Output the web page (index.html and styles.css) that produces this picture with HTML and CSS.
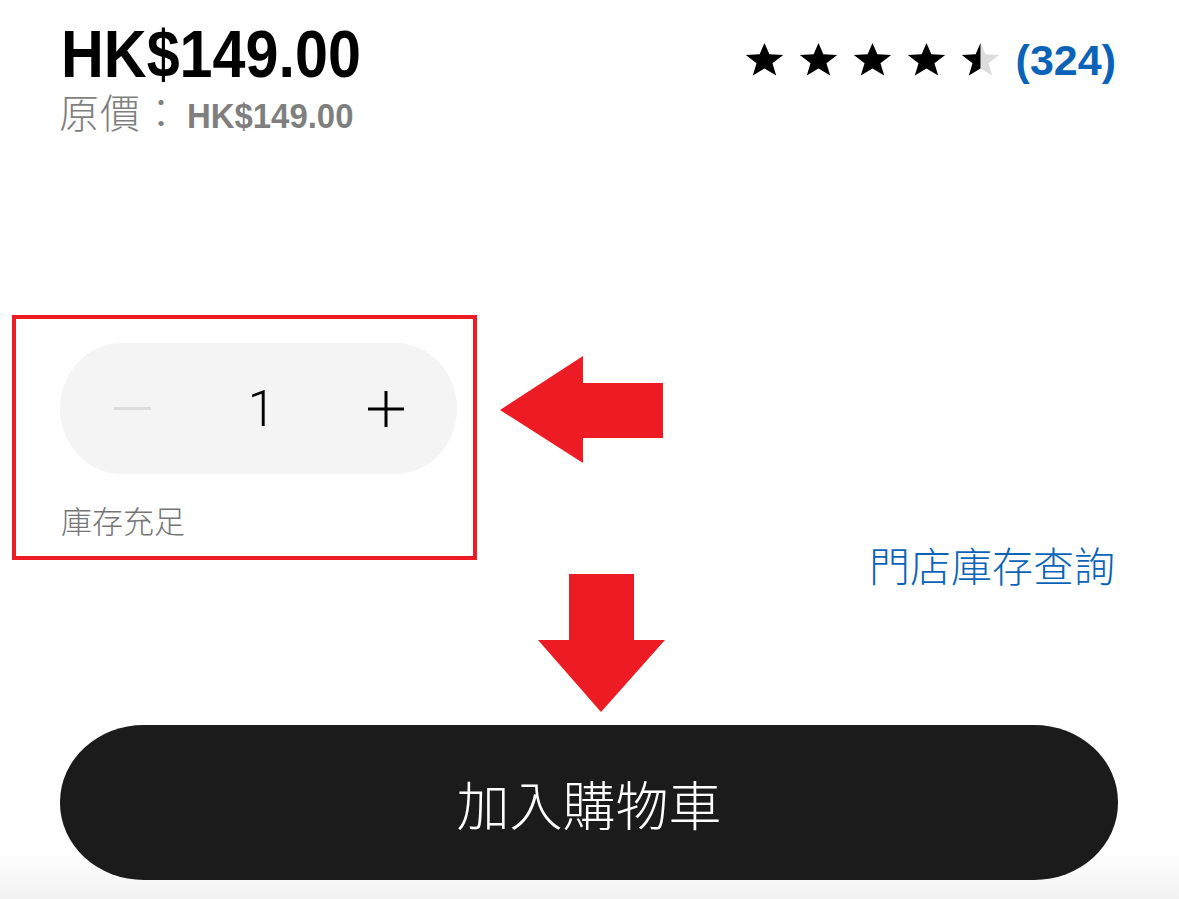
FILE: index.html
```html
<!DOCTYPE html>
<html lang="zh-Hant">
<head>
<meta charset="utf-8">
<title>HK$149.00</title>
<link rel="stylesheet" href="styles.css">
</head>
<body>
<div class="page">
  <div class="top">
    <div class="prices">
      <div class="price"><span class="price-num">HK$149.00</span></div>
      <div class="orig"><span class="orig-label">原價：</span><span class="orig-num">HK$149.00</span></div>
    </div>
    <div class="rating">
      <svg class="star" viewBox="0 0 24 22" preserveAspectRatio="none"><polygon points="12,0.6 15,8 23.5,8.4 16.9,13.8 19.2,21.6 12,17.2 4.8,21.6 7.1,13.8 0.5,8.4 9,8"/></svg>
      <svg class="star" viewBox="0 0 24 22" preserveAspectRatio="none"><polygon points="12,0.6 15,8 23.5,8.4 16.9,13.8 19.2,21.6 12,17.2 4.8,21.6 7.1,13.8 0.5,8.4 9,8"/></svg>
      <svg class="star" viewBox="0 0 24 22" preserveAspectRatio="none"><polygon points="12,0.6 15,8 23.5,8.4 16.9,13.8 19.2,21.6 12,17.2 4.8,21.6 7.1,13.8 0.5,8.4 9,8"/></svg>
      <svg class="star" viewBox="0 0 24 22" preserveAspectRatio="none"><polygon points="12,0.6 15,8 23.5,8.4 16.9,13.8 19.2,21.6 12,17.2 4.8,21.6 7.1,13.8 0.5,8.4 9,8"/></svg>
      <svg class="star" viewBox="0 0 24 22" preserveAspectRatio="none">
        <defs>
          <clipPath id="lh"><rect x="0" y="0" width="12" height="22"/></clipPath>
          <clipPath id="rh"><rect x="12" y="0" width="12" height="22"/></clipPath>
        </defs>
        <polygon class="star-empty" clip-path="url(#rh)" points="12,0.6 15,8 23.5,8.4 16.9,13.8 19.2,21.6 12,17.2 4.8,21.6 7.1,13.8 0.5,8.4 9,8"/>
        <polygon clip-path="url(#lh)" points="12,0.6 15,8 23.5,8.4 16.9,13.8 19.2,21.6 12,17.2 4.8,21.6 7.1,13.8 0.5,8.4 9,8"/>
      </svg>
      <span class="count">(324)</span>
    </div>
  </div>

  <div class="stock-row">
    <div class="annot">
      <div class="stepper">
        <span class="minus"></span>
        <span class="qty">1</span>
        <svg class="plus" viewBox="0 0 36 36"><path d="M18 0V36M0 18H36"/></svg>
      </div>
      <div class="stock">庫存充足</div>
    </div>
    <a class="store-link">門店庫存查詢</a>
  </div>

  <button class="cart">加入購物車</button>

  <svg class="arrow arrow-left" viewBox="0 0 165 109"><polygon points="0,54 83,0 83,27 163,27 163,82 83,82 83,107"/></svg>
  <svg class="arrow arrow-down" viewBox="0 0 129 140"><polygon points="31,0 96,0 96,66 127,66 63,138 0,66 31,66"/></svg>
</div>
</body>
</html>
```
FILE: styles.css
```css
html, body {
  margin: 0;
  padding: 0;
}
body {
  background: linear-gradient(to bottom, #ffffff 0, #ffffff 850px, #f2f2f2 899px);
  min-height: 899px;
  font-family: "Liberation Sans", Arial, sans-serif;
}
.page {
  position: relative;
  padding: 21px 61px 0 60px;
  height: 878px;
}
.top {
  display: flex;
  justify-content: space-between;
  align-items: flex-start;
}
.price {
  height: 66px;
  line-height: 66px;
  font-size: 67px;
  font-weight: 700;
  color: #000;
  white-space: nowrap;
}
.price-num {
  display: inline-block;
  transform: scaleX(0.885);
  transform-origin: left center;
  margin-left: 1px;
}
.orig {
  line-height: 40px;
  font-size: 35px;
  color: #7f7f7f;
  white-space: nowrap;
  margin-top: 4px;
}
.orig-label {
  font-family: "Noto Sans CJK TC", "Noto Sans CJK SC", sans-serif;
  font-size: 40px;
  font-weight: 300;
  margin-left: -1px;
  letter-spacing: 1px;
}
.orig-num {
  display: inline-block;
  font-weight: 700;
  transform: scaleX(0.94);
  transform-origin: left center;
  margin-left: 5px;
}
.rating {
  display: flex;
  align-items: center;
  gap: 15px;
  margin-top: 18px;
  margin-right: 2px;
}
.star {
  width: 39px;
  height: 34px;
  fill: #000;
  margin-top: -3px;
}
.star-empty {
  fill: #dcdcdc;
}
.count {
  font-size: 43px;
  line-height: 42px;
  font-weight: 700;
  color: #0b63b8;
  margin-left: 1px;
}
.stock-row {
  display: flex;
  justify-content: space-between;
  align-items: flex-end;
  margin-top: 179px;
}
.annot {
  margin-left: -48px;
  width: 465px;
  height: 245px;
  border: 4px solid #ed1c24;
  padding: 24px 0 0 44px;
  box-sizing: border-box;
}
.stepper {
  width: 397px;
  height: 131px;
  background: #f4f4f4;
  border-radius: 62px / 66px;
  display: flex;
  align-items: center;
  justify-content: space-between;
  padding: 0 53px 0 54px;
  box-sizing: border-box;
}
.minus {
  width: 37px;
  height: 3px;
  background: #dcdcdc;
}
.qty {
  font-family: Roboto, "Liberation Sans", sans-serif;
  font-weight: 300;
  font-size: 50px;
  line-height: 50px;
  color: #000;
  margin-left: 4px;
}
.plus {
  width: 36px;
  height: 36px;
  stroke: #000;
  stroke-width: 3;
  fill: none;
}
.stock {
  margin-top: 30px;
  font-family: "Noto Sans CJK TC", "Noto Sans CJK SC", sans-serif;
  font-weight: 300;
  font-size: 31px;
  line-height: 31px;
  color: #757575;
  margin-left: 1px;
}
.store-link {
  font-family: "Noto Sans CJK TC", "Noto Sans CJK SC", sans-serif;
  font-weight: 300;
  font-size: 41px;
  line-height: 48px;
  color: #0b63b8;
  margin-bottom: -28px;
  margin-right: 3px;
  white-space: nowrap;
}
.cart {
  display: flex;
  align-items: center;
  justify-content: center;
  width: 100%;
  height: 155px;
  margin-top: 165px;
  border: none;
  border-radius: 84px / 77px;
  background: #1b1b1b;
  color: #fff;
  font-family: "Noto Sans CJK TC", "Noto Sans CJK SC", sans-serif;
  font-weight: 300;
  font-size: 53px;
  padding: 0;
}
.arrow {
  position: absolute;
  fill: #ed1c24;
}
.arrow-left {
  left: 500px;
  top: 356px;
  width: 165px;
  height: 109px;
}
.arrow-down {
  left: 538px;
  top: 574px;
  width: 129px;
  height: 140px;
}
```
